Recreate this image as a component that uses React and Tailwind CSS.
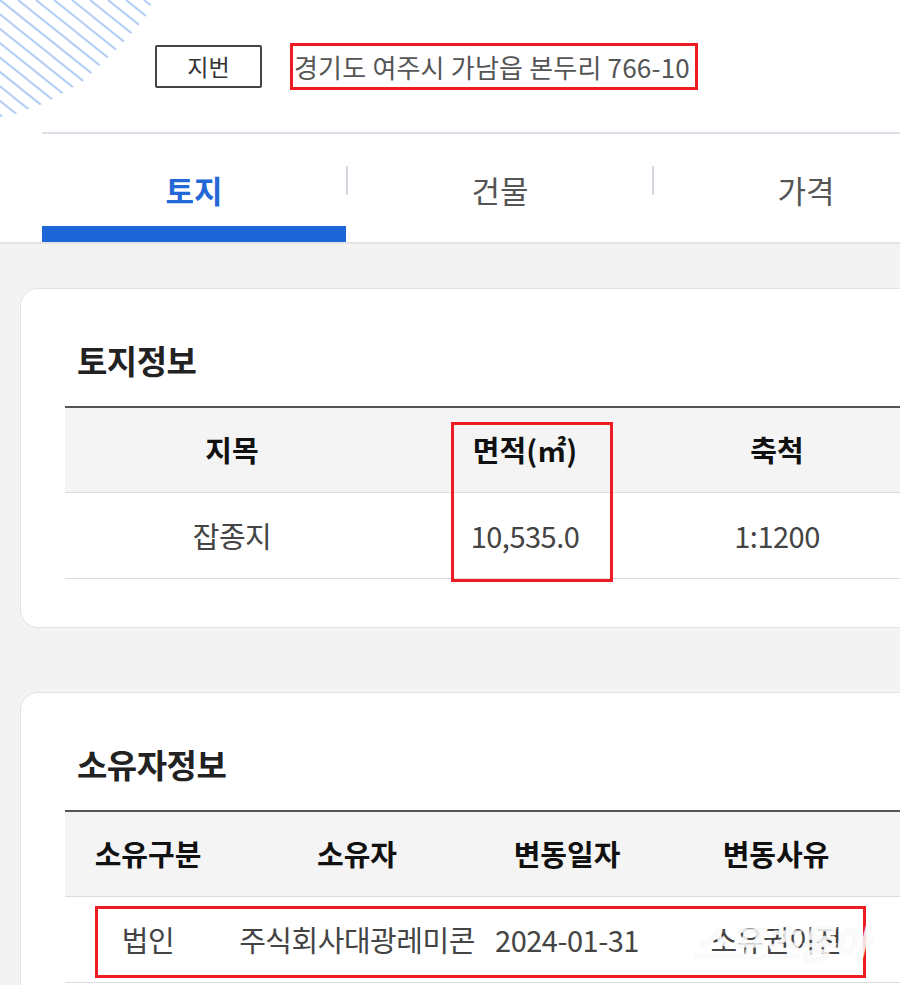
import React from 'react';

const font = "font-['Noto_Sans_CJK_KR','Noto_Sans',sans-serif]";

const Stripes = () => {
    const lines = [];
    for (let i = -9; i < 10; i++) {
        const x0 = i * 18;
        lines.push(<line key={i} x1={x0} y1={0} x2={x0 + 200} y2={160} />);
    }
    return (
        <svg className="absolute left-0 top-0" width="160" height="125" viewBox="0 0 160 125">
            <defs>
                <clipPath id="stripe-clip">
                    <polygon points="0,0 153,0 145,18 120,46 82,82 45,103 15,114 0,117" />
                </clipPath>
            </defs>
            <g clipPath="url(#stripe-clip)" stroke="#b6cff5" strokeWidth="2.2">
                {lines}
            </g>
        </svg>
    );
};

const tabs = [
    { label: '토지', active: true },
    { label: '건물', active: false },
    { label: '가격', active: false },
];

const landCols = 'grid grid-cols-[334px_252px_252px]';
const ownerCols = 'grid grid-cols-[166px_252px_168px_250px]';

const Card = ({ title, children, className }) => (
    <div className={`w-[928px] bg-white rounded-[18px] border border-[#e3e3e3] pt-[51px] pb-[48px] px-[44px] ${className || ''}`}>
        <h3 className="ml-[12px] text-[33px] leading-[40px] font-bold text-[#222] tracking-[-0.5px]">{title}</h3>
        {children}
    </div>
);

export default function App() {
    return (
        <div className={`w-[900px] h-[985px] overflow-hidden bg-[#f3f3f3] ${font}`}>
            <div className="w-[1000px]">
                <header className="relative bg-white border-b-2 border-[#e4e4e4]">
                    <Stripes />
                    <div className="relative h-[132px] flex items-center pl-[155px]">
                        <div className="w-[107px] h-[43px] border-2 border-[#444] rounded-[2px] flex items-center justify-center text-[23px] text-[#333]">
                            지번
                        </div>
                        <div className="ml-[28px] w-[408px] h-[47px] border-[3px] border-[#ed1c24] flex items-center pl-[1px] text-[26px] text-[#555] tracking-[0.2px] whitespace-nowrap">
                            경기도 여주시 가남읍 본두리 766-10
                        </div>
                    </div>
                    <div className="ml-[42px] border-t-2 border-[#dedee6] flex">
                        {tabs.map((t, i) => (
                            <React.Fragment key={t.label}>
                                {i > 0 && <div className="w-[2px] h-[29px] mt-[32px] bg-[#d6d6de]" />}
                                <div className="w-[304px] h-[108px] flex flex-col">
                                    <div className={`flex-1 flex items-center justify-center pt-[20px] text-[31px] ${t.active ? 'font-bold text-[#2468d8]' : 'text-[#555]'}`}>
                                        {t.label}
                                    </div>
                                    <div className={`h-[16px] ${t.active ? 'bg-[#1e66d8]' : ''}`} />
                                </div>
                            </React.Fragment>
                        ))}
                    </div>
                </header>

                <main className="pt-[44px] pl-[20px]">
                    <Card title="토지정보">
                        <div className="relative mt-[26px] border-t-2 border-[#555]">
                            <div className={`${landCols} h-[85px] items-center bg-[#f4f4f4] border-b border-[#dcdcdc] text-center text-[29px] font-bold text-[#111]`}>
                                <div>지목</div>
                                <div>면적(㎡)</div>
                                <div>축척</div>
                            </div>
                            <div className={`${landCols} h-[86px] items-center border-b border-[#dcdcdc] text-center text-[29px] text-[#444] tracking-[-0.5px]`}>
                                <div>잡종지</div>
                                <div>10,535.0</div>
                                <div>1:1200</div>
                            </div>
                            <div className="absolute left-[386px] top-[14px] w-[162px] h-[160px] border-[3px] border-[#ed1c24] pointer-events-none" />
                        </div>
                    </Card>

                    <Card title="소유자정보" className="mt-[64px]">
                        <div className="relative mt-[26px] border-t-2 border-[#555]">
                            <div className={`${ownerCols} h-[85px] items-center bg-[#f4f4f4] border-b border-[#dcdcdc] text-center text-[29px] font-bold text-[#111]`}>
                                <div>소유구분</div>
                                <div>소유자</div>
                                <div>변동일자</div>
                                <div>변동사유</div>
                            </div>
                            <div className={`${ownerCols} h-[86px] items-center border-b border-[#dcdcdc] text-center text-[29px] text-[#444] whitespace-nowrap tracking-[-0.5px]`}>
                                <div>법인</div>
                                <div>주식회사대광레미콘</div>
                                <div>2024-01-31</div>
                                <div>소유권이전</div>
                            </div>
                            <div className="absolute left-[30px] top-[94px] w-[771px] h-[72px] border-[3px] border-[#ed1c24] pointer-events-none" />
                            <div className="absolute left-[628px] top-[100px] text-[40px] font-bold italic text-white/85 tracking-[-2px] [text-shadow:0_0_1px_rgba(0,0,0,0.12)] pointer-events-none">
                                스포츠동아
                            </div>
                        </div>
                    </Card>
                </main>
            </div>
        </div>
    );
}
